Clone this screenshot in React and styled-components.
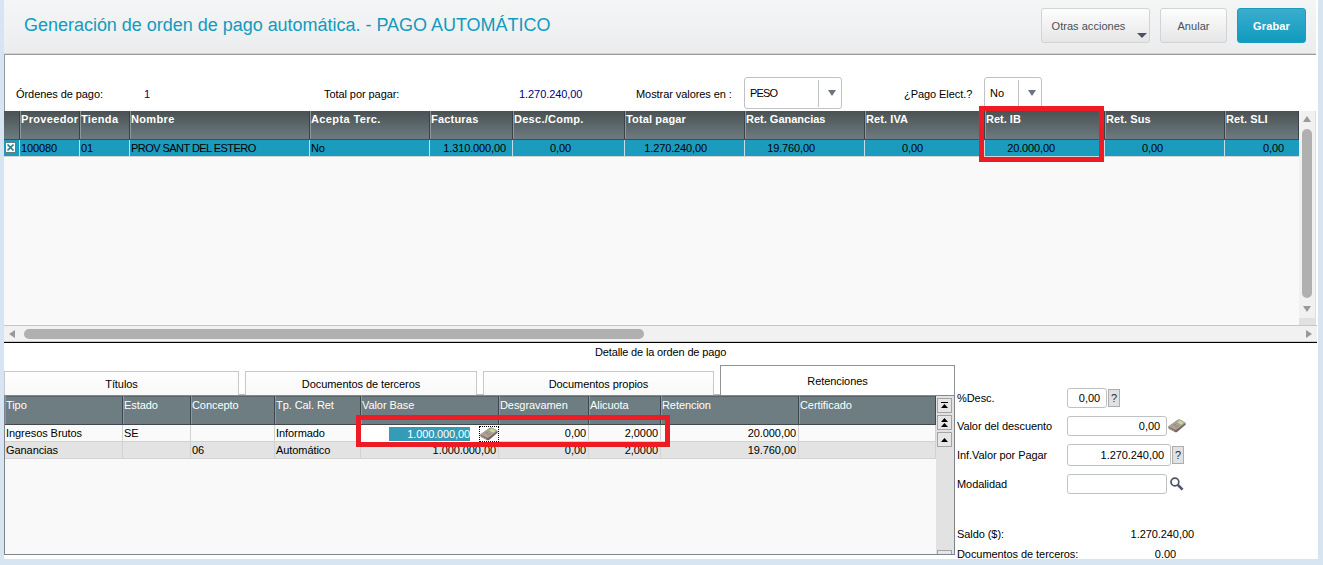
import React from 'react';
import styled, { createGlobalStyle } from 'styled-components';

const ordersColumns = [
	{ title: '', width: 16, value: '' },
	{ title: 'Proveedor', width: 60, value: '100080', spacing: 0.33 },
	{ title: 'Tienda', width: 50, value: '01', spacing: 0.35 },
	{ title: 'Nombre', width: 180, value: 'PROV SANT DEL ESTERO', spacing: 0.35, valueSpacing: -0.55 },
	{ title: 'Acepta Terc.', width: 120, value: 'No', spacing: 0.38 },
	{ title: 'Facturas', width: 83, value: '1.310.000,00', pad: 7, spacing: 0.2 },
	{ title: 'Desc./Comp.', width: 112, value: '0,00', pad: 54, spacing: 0.27 },
	{ title: 'Total pagar', width: 120, value: '1.270.240,00', pad: 38, spacing: 0.13 },
	{ title: 'Ret. Ganancias', width: 120, value: '19.760,00', pad: 50 },
	{ title: 'Ret. IVA', width: 120, value: '0,00', pad: 62, spacing: 0.1 },
	{ title: 'Ret. IB', width: 120, value: '20.000,00', pad: 50 },
	{ title: 'Ret. Sus', width: 120, value: '0,00', pad: 62, spacing: 0.1 },
	{ title: 'Ret. SLI', width: 74, value: '0,00', pad: 16, spacing: 0.1 },
];

const retentionColumns = [
	{ title: 'Tipo', width: 118 },
	{ title: 'Estado', width: 68 },
	{ title: 'Concepto', width: 84 },
	{ title: 'Tp. Cal. Ret', width: 86 },
	{ title: 'Valor Base', width: 138, pad: 3 },
	{ title: 'Desgravamen', width: 90, pad: 3 },
	{ title: 'Alicuota', width: 72, pad: 3 },
	{ title: 'Retencion', width: 138, pad: 3 },
	{ title: 'Certificado', width: 137 },
];

const retentions = [
	['Ingresos Brutos', 'SE', '', 'Informado', '1.000.000,00', '0,00', '2,0000', '20.000,00', ''],
	['Ganancias', '', '06', 'Automático', '1.000.000,00', '0,00', '2,0000', '19.760,00', ''],
];

const CalculatorIcon = () => (
	<svg width='18' height='14' viewBox='0 0 18 14'>
		<path d='M0.3 7.6 L9.5 1 Q11.2 0 12.8 0.9 L17.6 4 V5.8 L9 12.9 Q8 13.6 6.8 13 L0.6 9.8 Z' fill='#75665c' />
		<path d='M0.3 7.4 L9.5 1 Q11.2 0 12.8 0.9 L17.6 4 L8.6 10.6 Q7.6 11.2 6.4 10.6 Z' fill='#aea298' />
		<path d='M9.4 3.2 L12 1.6 L15.6 3.8 L13 5.7 Z' fill='#c4e08a' />
		<path d='M4.2 6.8 L8.2 4.2 L11.6 6.2 L7.6 9 Z' fill='#8b7c71' />
		<path d='M4.9 7 l2.8 1.5 M6.4 5.9 l2.8 1.6 M7.9 4.9 l2.8 1.6' stroke='#d8cfc8' strokeWidth='0.7' />
		<path d='M1 9.2 L6.8 12.2' stroke='#c4bbb3' strokeWidth='0.6' />
	</svg>
);

const SearchIcon = () => (
	<svg width='14' height='14' viewBox='0 0 14 14' fill='none' stroke='#4b5568'>
		<circle cx='4.9' cy='5' r='3.9' strokeWidth='1.7' />
		<path d='M7.8 7.8 L12.6 12.6' strokeWidth='2.6' />
	</svg>
);

const App = () => (
	<>
		<GlobalStyle />
		<Window>
			<Header>
				<Title>Generación de orden de pago automática. - PAGO AUTOMÁTICO</Title>
				<Button $width={109} $shift={-7} $end={10}>
					Otras acciones
					<ButtonArrow />
				</Button>
				<Button $width={67} $end={10}>Anular</Button>
				<Button $width={69} $primary>Grabar</Button>
			</Header>

			<Summary>
				<Text $width={128}>Órdenes de pago:</Text>
				<Text $width={180} $navy>1</Text>
				<Text $width={195}>Total por pagar:</Text>
				<Text $width={117} $navy>1.270.240,00</Text>
				<Text $width={108}>Mostrar valores en :</Text>
				<Select $width={98} $spacing={-0.8}><span>PESO</span><SelectArrow /></Select>
				<Text $width={80} $start={62}>¿Pago Elect.?</Text>
				<Select $width={58}><span>No</span><SelectArrow /></Select>
			</Summary>

			<Orders>
				<OrdersGrid>
					<OrdersRow>
						{ordersColumns.map(({ title, width, spacing }, i) => (
							<OrdersHead key={i} $width={width} $spacing={spacing}>{title}</OrdersHead>
						))}
					</OrdersRow>
					<OrdersRow>
						{ordersColumns.map(({ width, value, pad, valueSpacing }, i) => (
							<OrdersCell key={i} $width={width} $pad={pad} $spacing={valueSpacing}>
								{i === 0 ? (
									<CheckBox width='11' height='11' viewBox='0 0 11 11'>
										<rect x='.5' y='.5' width='10' height='10' fill='#fff' stroke='#6b7a80' />
										<path d='M2.5 2.5 L8.5 8.5 M8.5 2.5 L2.5 8.5' stroke='#1f7f86' strokeWidth='1.7' />
									</CheckBox>
								) : value}
							</OrdersCell>
						))}
					</OrdersRow>
				</OrdersGrid>
				<VerticalBar>
					<svg width='8' height='6'><path d='M0 6 L4 0 L8 6 Z' fill='#999' /></svg>
					<VerticalThumb />
					<svg width='8' height='6'><path d='M0 0 L8 0 L4 6 Z' fill='#999' /></svg>
				</VerticalBar>
				<Highlight $left={975} $top={-5} $width={125} $height={56} />
			</Orders>
			<HorizontalBar>
				<svg width='6' height='8'><path d='M6 0 L6 8 L0 4 Z' fill='#999' /></svg>
				<HorizontalThumb />
				<svg width='6' height='8'><path d='M0 0 L6 4 L0 8 Z' fill='#999' /></svg>
			</HorizontalBar>

			<DetailTitle>Detalle de la orden de pago</DetailTitle>

			<Detail>
				<Retentions>
					<Tabs>
						<Tab $width={235}>Títulos</Tab>
						<Tab $width={232}>Documentos de terceros</Tab>
						<Tab $width={231}>Documentos propios</Tab>
						<Tab $width={235} $active>Retenciones</Tab>
					</Tabs>
					<RetentionsBox>
						<RetentionsGrid>
							<OrdersRow>
								{retentionColumns.map(({ title, width }) => (
									<RetentionsHead key={title} $width={width}>{title}</RetentionsHead>
								))}
							</OrdersRow>
							{retentions.map((row, r) => (
								<OrdersRow key={r}>
									{row.map((value, i) => (r === 0 && i === 4 ? (
										<EditCell key={i}>
											<Selection>{value}</Selection>
											<IconFocus><CalculatorIcon /></IconFocus>
										</EditCell>
									) : (
										<RetentionsCell
											key={i}
											$width={retentionColumns[i].width}
											$pad={retentionColumns[i].pad}
											$alt={r === 1}>
											{value}
										</RetentionsCell>
									)))}
								</OrdersRow>
							))}
						</RetentionsGrid>
						<Pager>
							<PagerButton>
								<svg width='7' height='7'><path d='M0 0 H7 V1 H0 Z M0 6 L3.5 2 L7 6 Z' /></svg>
							</PagerButton>
							<PagerButton>
								<svg width='7' height='9'><path d='M0 4 L3.5 0 L7 4 Z M0 9 L3.5 5 L7 9 Z' /></svg>
							</PagerButton>
							<PagerButton>
								<svg width='7' height='4'><path d='M0 4 L3.5 0 L7 4 Z' /></svg>
							</PagerButton>
							<PagerButton $last />
						</Pager>
						<Highlight $left={351} $top={19} $width={314} $height={32} />
					</RetentionsBox>
				</Retentions>

				<Side>
					<Field $height={20} $after={8}>
						<Label>%Desc.</Label>
						<Input $width={40}>0,00</Input>
						<Help>?</Help>
					</Field>
					<Field $height={20} $after={8}>
						<Label>Valor del descuento</Label>
						<Input $width={100}>0,00</Input>
						<CalculatorIcon />
					</Field>
					<Field $height={22} $after={8}>
						<Label>Inf.Valor por Pagar</Label>
						<Input $width={104}>1.270.240,00</Input>
						<Help>?</Help>
					</Field>
					<Field $height={20} $after={33}>
						<Label>Modalidad</Label>
						<Input $width={100} />
						<IconPad><SearchIcon /></IconPad>
					</Field>
					<Total $width={237}><span>Saldo ($):</span><span>1.270.240,00</span></Total>
					<Total $width={219}><span>Documentos de terceros:</span><span>0.00</span></Total>
				</Side>
			</Detail>
		</Window>
	</>
);

const GlobalStyle = createGlobalStyle`
  * {
    box-sizing: border-box;
  }

  body {
    margin: 0;
    background: #d7e4f2;
    font: 11px/14px "Liberation Sans", Arial, sans-serif;
    letter-spacing: -0.07px;
    color: #000;
    overflow: hidden;
  }

  svg {
    display: block;
    flex: none;
  }
`;

const Window = styled.div`
  width: 1314px;
  height: 559px;
  margin-left: 4px;
  background: #fff;
  overflow: hidden;
`;

const Header = styled.div`
  display: flex;
  align-items: flex-start;
  width: 1312px;
  height: 55px;
  padding: 8px 10px 0 20px;
  background: linear-gradient(#f4f6f6, #ebecee);
  border-bottom: 1px solid #999;
  box-shadow: inset 0 -1px #d4d5d6;
`;

const Title = styled.div`
  flex: 1;
  padding-top: 6px;
  font-size: 18px;
  line-height: 22px;
  letter-spacing: -0.02px;
  color: #109bbf;
`;

const Button = styled.div`
  position: relative;
  display: flex;
  align-items: center;
  justify-content: center;
  width: ${({ $width }) => $width}px;
  height: 35px;
  padding-top: 1px;
  padding-right: ${({ $shift }) => ($shift ? -2 * $shift : 0)}px;
  margin-right: ${({ $end }) => $end || 0}px;
  border: 1px solid ${({ $primary }) => ($primary ? '#1a9dc0' : '#d2d3d4')};
  border-radius: 3px;
  background: ${({ $primary }) => ($primary ? 'linear-gradient(#3badcd, #0f9bbf)' : 'linear-gradient(#fdfdfd, #e6e6e6)')};
  color: ${({ $primary }) => ($primary ? '#fff' : '#4a4f57')};
  font-weight: ${({ $primary }) => ($primary ? 'bold' : 'normal')};
  letter-spacing: ${({ $primary }) => ($primary ? 0.15 : 0.03)}px;
  white-space: nowrap;
`;

const ButtonArrow = styled.i`
  position: absolute;
  right: 2px;
  bottom: 4px;
  border: 5px solid transparent;
  border-top-color: #4b5261;
  border-bottom: 0;
`;

const Summary = styled.div`
  display: flex;
  align-items: flex-start;
  height: 56px;
  padding: 22px 0 0 11px;
  border-left: 1px solid #999;
`;

const Text = styled.div`
  flex: none;
  width: ${({ $width }) => $width}px;
  margin-left: ${({ $start }) => $start || 0}px;
  padding-top: 10px;
  color: ${({ $navy }) => ($navy ? '#000080' : '#000')};
`;

const Select = styled.div`
  display: flex;
  justify-content: space-between;
  width: ${({ $width }) => $width}px;
  height: 32px;
  border: 1px solid #bfc2c4;
  border-radius: 3px;
  background: #fff;
  letter-spacing: ${({ $spacing }) => $spacing || 0}px;

  span {
    padding: 8px 0 0 5px;
  }
`;

const SelectArrow = styled.div`
  width: 23px;
  height: 27px;
  margin-top: 2px;
  border-left: 1px solid #bfc2c4;

  &::after {
    content: '';
    display: block;
    width: 0;
    margin: 10px 0 0 9px;
    border: 4px solid transparent;
    border-top: 6px solid #6b7382;
    border-bottom: 0;
  }
`;

const Orders = styled.div`
  position: relative;
  display: flex;
  height: 214px;
`;

const OrdersGrid = styled.div`
  width: 1295px;
  background: #f9f9f9;
`;

const OrdersRow = styled.div`
  display: flex;
`;

const OrdersHead = styled.div`
  width: ${({ $width }) => $width}px;
  height: 29px;
  padding: 1px 0 0 1px;
  border-right: 1px solid #3b4245;
  border-bottom: 1px solid #454c4f;
  background: linear-gradient(#4a5153, #6c7b80);
  box-shadow: inset 1px 0 #8d989c;
  color: #fff;
  font-weight: bold;
  letter-spacing: ${({ $spacing }) => $spacing || 0}px;
  white-space: nowrap;

  &:first-child {
    box-shadow: none;
  }
`;

const OrdersCell = styled.div`
  display: flex;
  justify-content: ${({ $pad }) => ($pad ? 'flex-end' : 'flex-start')};
  width: ${({ $width }) => $width}px;
  height: 17px;
  padding: 1px ${({ $pad }) => ($pad ? $pad - 1 : 0)}px 0 1px;
  border-right: 1px solid #c6dde4;
  border-bottom: 1px solid #d4d4d4;
  background: #1b9bbd;
  letter-spacing: ${({ $spacing }) => $spacing || -0.12}px;
  white-space: nowrap;

  &:last-child {
    border-right: 0;
  }
`;

const CheckBox = styled.svg`
  margin-top: 1px;
`;

const VerticalBar = styled.div`
  display: flex;
  flex-direction: column;
  align-items: center;
  width: 17px;
  height: 207px;
  padding: 5px 0 6px;
  background: #f1f1f1;
  border-right: 1px solid #ddd;
  box-shadow: 0 7px #e1e1e1;
`;

const VerticalThumb = styled.div`
  flex: 1;
  width: 10px;
  margin: 7px 0 8px;
  border-radius: 5px;
  background: #b0b0b0;
`;

const HorizontalBar = styled.div`
  display: flex;
  align-items: center;
  justify-content: space-between;
  width: 1313px;
  height: 18px;
  padding: 0 5px;
  border-top: 1px solid #c6c6c6;
  border-bottom: 1px solid #000;
  background: #f1f1f1;
  box-shadow: inset 0 -1px #ccc;
`;

const HorizontalThumb = styled.div`
  width: 620px;
  height: 10px;
  margin: 0 auto 0 9px;
  border-radius: 5px;
  background: #b0b0b0;
`;

const Highlight = styled.div`
  position: absolute;
  left: ${({ $left }) => $left}px;
  top: ${({ $top }) => $top}px;
  width: ${({ $width }) => $width}px;
  height: ${({ $height }) => $height}px;
  border: 5px solid #ed1c24;
`;

const DetailTitle = styled.div`
  height: 22px;
  padding: 2px 0 0 591px;
  letter-spacing: -0.15px;
`;

const Detail = styled.div`
  display: flex;
`;

const Retentions = styled.div`
  width: 951px;
`;

const Tabs = styled.div`
  display: flex;
  align-items: flex-end;
  gap: 6px;
  height: 31px;
  border-bottom: 1px solid #85888f;
  box-shadow: inset 0 -1px #bbb;
`;

const Tab = styled.div`
  width: ${({ $width }) => $width}px;
  height: ${({ $active }) => ($active ? 30 : 24)}px;
  padding-top: ${({ $active }) => ($active ? 8 : 5)}px;
  border: 1px solid ${({ $active }) => ($active ? '#8f9296' : '#c8c8c8')};
  border-bottom: 0;
  background: ${({ $active }) => ($active ? '#fff' : 'linear-gradient(#fff, #f8f8f8)')};
  text-align: center;
`;

const RetentionsBox = styled.div`
  position: relative;
  display: flex;
  height: 159px;
  border: 1px solid #7f848c;
  border-top: 0;
`;

const RetentionsGrid = styled.div`
  width: 931px;
  background: #f9f9f9;
`;

const RetentionsHead = styled.div`
  width: ${({ $width }) => $width}px;
  height: 29px;
  padding: 2px 0 0 1px;
  border-right: 1px solid #3f474a;
  border-bottom: 1px solid #42484b;
  background: #6e7d81;
  box-shadow: inset 1px 0 #8d989c, inset 0 1px #5a6367;
  color: #fff;
`;

const RetentionsCell = styled.div`
  width: ${({ $width }) => $width}px;
  height: 17px;
  padding: 1px ${({ $pad }) => ($pad ? $pad - 1 : 0)}px 0 1px;
  border-right: 1px solid #d2d2d2;
  border-bottom: 1px solid #d2d2d2;
  background: ${({ $alt }) => ($alt ? '#e3e3e3' : '#fafafa')};
  text-align: ${({ $pad }) => ($pad ? 'right' : 'left')};
  white-space: nowrap;
`;

const EditCell = styled.div`
  display: flex;
  width: 138px;
  height: 17px;
  padding: 1px 0 0 28px;
  background: #fff;
`;

const Selection = styled.div`
  width: 81px;
  height: 14px;
  margin-top: 1px;
  background: #349cb7;
  color: #fff;
  letter-spacing: -0.12px;
  text-align: right;
`;

const IconFocus = styled.div`
  width: 20px;
  height: 16px;
  margin-left: 9px;
  border: 1px dotted #000;
`;

const Pager = styled.div`
  display: flex;
  flex-direction: column;
  align-items: flex-start;
  gap: 2px;
  width: 18px;
  padding: 2px 0 0 1px;
  background: #e2e2e2;
`;

const PagerButton = styled.div`
  display: flex;
  align-items: center;
  justify-content: center;
  width: 15px;
  height: ${({ $last }) => ($last ? 4 : 15)}px;
  margin-top: ${({ $last }) => ($last ? 'auto' : 0)};
  border: 1px solid #a3a3a3;
  border-bottom-width: ${({ $last }) => ($last ? 0 : 1)}px;
  background: #e6e6e6;
`;

const Side = styled.div`
  width: 355px;
  padding: 23px 0 0 2px;
`;

const Field = styled.div`
  display: flex;
  align-items: center;
  height: ${({ $height }) => $height}px;
  margin-bottom: ${({ $after }) => $after}px;
`;

const Label = styled.div`
  width: 110px;
`;

const Input = styled.div`
  align-self: stretch;
  display: flex;
  align-items: center;
  justify-content: flex-end;
  width: ${({ $width }) => $width}px;
  margin-right: 1px;
  padding-right: 6px;
  border: 1px solid #bfc2c4;
  border-radius: 3px;
  background: #fff;
`;

const Help = styled.div`
  width: 12px;
  height: 18px;
  border: 1px solid #adadad;
  background: #e1e1e1;
  color: #222b3a;
  line-height: 16px;
  text-align: center;
`;

const IconPad = styled.div`
  padding-left: 2px;
`;

const Total = styled.div`
  display: flex;
  justify-content: space-between;
  width: ${({ $width }) => $width}px;
  height: 20px;
`;

export default App;
